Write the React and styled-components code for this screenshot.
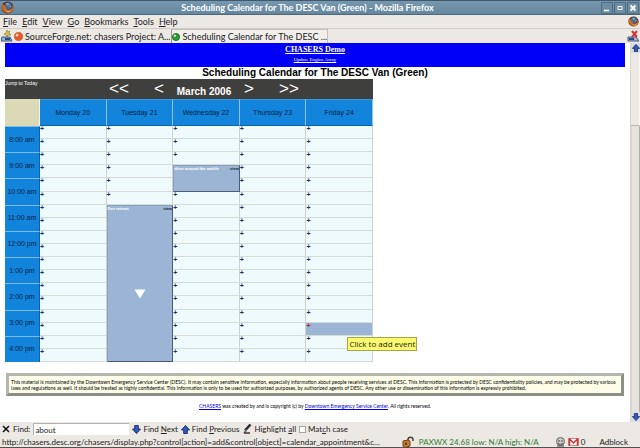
import React, { useState } from "react";
import styled, { createGlobalStyle } from "styled-components";

const days = ["Monday 20", "Tuesday 21", "Wednesday 22", "Thursday 23", "Friday 24"];

const hours = [
	"8:00 am",
	"9:00 am",
	"10:00 am",
	"11:00 am",
	"12:00 pm",
	"1:00 pm",
	"2:00 pm",
	"3:00 pm",
	"4:00 pm",
];

// start and length are counted in half hours from 8:00 am
const events = [
	{ day: 1, start: 6, length: 12, title: "Dev retreat", more: true },
	{ day: 2, start: 3, length: 2, title: "drive around the awhile" },
];

const hovered = { day: 4, slot: 15 };

const menus = ["File", "Edit", "View", "Go", "Bookmarks", "Tools", "Help"];

const FirefoxIcon = ({ size }) => (
	<svg width={size} height={size} viewBox="0 0 14 14" aria-hidden="true">
		<circle cx="7" cy="7" r="6.5" fill="#5a2a1c" />
		<circle cx="7.5" cy="5.5" r="4" fill="#3c6c9c" />
		<path d="M5 2.5l3-.5 1 2-2 1zM8 5l3 0-1 2z" fill="#88a8b8" />
		<path
			d="M1 3c-1 5 1 9 6 10 4 0 6.500-3 6.500-6.500l-1-2.500c0 5-3 6.500-5.500 5.500-2-.8-1.500-2-.5-2.700C4 7 3.500 5.500 4 4.500L2.500 4z"
			fill="#cf6a24"
		/>
		<path d="M4 10c3 2 6 1 7.500-1.500C11 12 7 13 4 10z" fill="#f0b45c" />
	</svg>
);

const Ball = ({ color, dark, size }) => (
	<svg width={size} height={size} viewBox="0 0 10 10" aria-hidden="true">
		<circle cx="5" cy="5" r="4.500" fill={color} stroke={dark} />
		<circle cx="3.500" cy="3.500" r="1.500" fill="#fff" opacity="0.75" />
	</svg>
);

const NewTabIcon = () => (
	<svg width="12" height="12" viewBox="0 0 12 12" aria-hidden="true">
		<path d="M1 7h8l2 4H0z" fill="#9fb0cc" stroke="#44587e" />
		<path d="M4 8h5v2H4z" fill="#284890" />
		<path d="M6 0l1 2 2-1-1 2 2 2-3 0-1 2-1-2-2-1 2-1z" fill="#d8c240" stroke="#6f6420" strokeWidth="0.5" />
	</svg>
);

const CloseTabIcon = () => (
	<svg width="12" height="12" viewBox="0 0 12 12" aria-hidden="true">
		<path d="M1 7h8l3 4H1z" fill="#a9b4ca" stroke="#44587e" />
		<path d="M2 8h5v2H2z" fill="#284890" />
		<path d="M5 1l5 6M10 1L5 7" stroke="#d03434" strokeWidth="2" />
	</svg>
);

const ArrowIcon = ({ up, size }) => (
	<svg width={size} height={size} viewBox="0 0 10 10" aria-hidden="true">
		<path
			d={up ? "M5 .5L9.500 5.500H7V9.500H3V5.500H.5z" : "M5 9.500L.5 4.500H3V.5H7V4.500H9.500z"}
			fill="#3458b8"
			stroke="#142a68"
		/>
	</svg>
);

const MarkerIcon = () => (
	<svg width="10" height="10" viewBox="0 0 10 10" aria-hidden="true">
		<path d="M8.500 .5L3 6.500" stroke="#2c2c2c" strokeWidth="2.500" />
		<path d="M4 5L1 9h2l2-2z" fill="#777" />
		<path d="M2 9h6" stroke="#443030" strokeWidth="1.500" />
	</svg>
);

const LockIcon = () => (
	<svg width="13" height="12" viewBox="0 0 13 12" aria-hidden="true">
		<path d="M6 5V3.500C6 .5 11 .5 11 3.500V5" fill="none" stroke="#444" strokeWidth="1.500" />
		<path d="M1 5l5-1 2 1v5l-5 1.500L1 10z" fill="#c47e2c" stroke="#6c4012" />
		<path d="M4 6.500v2.500" stroke="#3c2408" strokeWidth="1.500" />
	</svg>
);

const AgentIcon = () => (
	<svg width="11" height="10" viewBox="0 0 11 10" aria-hidden="true">
		<circle cx="5.500" cy="4.500" r="4" fill="#ccc" stroke="#666" />
		<path d="M3 4h2M6 4h2M3 6.500c2 1 3 1 5 0M2 9h7" stroke="#444" fill="none" />
	</svg>
);

const MailIcon = () => (
	<svg width="11" height="8" viewBox="0 0 11 8" aria-hidden="true">
		<path d="M.5 .5h10v7H.5z" fill="#fff" stroke="#c88" />
		<path d="M1.500 7.500V1L5.500 5l4-4v6.500" fill="none" stroke="#d03030" strokeWidth="1.500" />
	</svg>
);

const Mnemonic = ({ text, at = 0 }) => (
	<>
		{text.slice(0, at)}
		<u>{text[at]}</u>
		{text.slice(at + 1)}
	</>
);

const DayCell = ({ day, slot }) => {
	const event = events.find((e) => e.day === day && slot >= e.start && slot < e.start + e.length);

	if (event && event.start !== slot) return null;

	if (event) {
		return (
			<EventCell rowSpan={event.length}>
				<EventHead>
					<span>{event.title}</span>
					<ViewLink href="#view">view</ViewLink>
				</EventHead>
				{event.more && (
					<More width="12" height="10" viewBox="0 0 12 10" aria-hidden="true">
						<path d="M.5 .5h11L6 9.500z" fill="#fff" />
					</More>
				)}
			</EventCell>
		);
	}

	const active = hovered.day === day && hovered.slot === slot;

	return (
		<SlotCell $active={active}>
			<AddLink href="#add" $active={active}>
				+
			</AddLink>
			{active && <Tooltip role="tooltip">Click to add event</Tooltip>}
		</SlotCell>
	);
};

const Calendar = () => (
	<CalendarWrap>
		<NavBar>
			<JumpLink href="#today">Jump to Today</JumpLink>
			<NavLink href="#back4">&lt;&lt;</NavLink>
			<NavLink href="#back1">&lt;</NavLink>
			<Month>March 2006</Month>
			<NavLink href="#next1">&gt;</NavLink>
			<NavLink href="#next4">&gt;&gt;</NavLink>
		</NavBar>
		<Grid>
			<thead>
				<tr>
					<Corner />
					{days.map((day) => (
						<DayHead key={day} scope="col">
							{day}
						</DayHead>
					))}
				</tr>
			</thead>
			<tbody>
				{hours.map((hour, h) => (
					<React.Fragment key={hour}>
						<tr>
							<TimeHead scope="row" rowSpan={2}>
								{hour}
							</TimeHead>
							{days.map((day, d) => (
								<DayCell key={day} day={d} slot={h * 2} />
							))}
						</tr>
						<tr>
							{days.map((day, d) => (
								<DayCell key={day} day={d} slot={h * 2 + 1} />
							))}
						</tr>
					</React.Fragment>
				))}
			</tbody>
		</Grid>
	</CalendarWrap>
);

const App = () => {
	const [query, setQuery] = useState("about");

	return (
		<Window>
			<GlobalStyle />
			<TitleBar>
				<FirefoxIcon size={13} />
				<WindowTitle>Scheduling Calendar for The DESC Van (Green) - Mozilla Firefox</WindowTitle>
				<WindowButton aria-label="Minimize">
					<svg width="8" height="8" viewBox="0 0 8 8">
						<path d="M1 6.500h5" stroke="#fff" strokeWidth="1.500" />
					</svg>
				</WindowButton>
				<WindowButton aria-label="Maximize">
					<svg width="8" height="8" viewBox="0 0 8 8">
						<path d="M2 2.500h4v3H2z" fill="none" stroke="#fff" />
					</svg>
				</WindowButton>
				<WindowButton aria-label="Close">
					<svg width="8" height="8" viewBox="0 0 8 8">
						<path d="M1.500 1.500l5 5M6.500 1.500l-5 5" stroke="#fff" strokeWidth="2" />
					</svg>
				</WindowButton>
			</TitleBar>

			<MenuBar>
				{menus.map((menu) => (
					<MenuButton key={menu}>
						<Mnemonic text={menu} />
					</MenuButton>
				))}
				<Spacer />
				<FirefoxIcon size={11} />
			</MenuBar>

			<TabBar>
				<IconButton aria-label="New tab">
					<NewTabIcon />
				</IconButton>
				<Tab>
					<Ball color="#e8562c" dark="#c8702c" size={9} />
					SourceForge.net: chasers Project: A...
				</Tab>
				<Tab $active>
					<Ball color="#2c9c2c" dark="#145c14" size={8} />
					Scheduling Calendar for The DESC ...
				</Tab>
				<Spacer />
				<IconButton aria-label="Close tab">
					<CloseTabIcon />
				</IconButton>
			</TabBar>

			<Viewport>
				<Page>
					<Banner>
						<BannerLink href="#home">CHASERS Demo</BannerLink>
						<BannerLink href="#update" $small>
							Update Engine Array
						</BannerLink>
					</Banner>
					<PageTitle>Scheduling Calendar for The DESC Van (Green)</PageTitle>
					<Calendar />
					<Notice>
						This material is maintained by the Downtown Emergency Service Center (DESC). It may contain
						sensitive information, especially information about people receiving services at DESC. This
						information is protected by DESC confidentiality policies, and may be protected by various laws and
						regulations as well. It should be treated as highly confidential. This information is only to be
						used for authorized purposes, by authorized agents of DESC. Any other use or dissemination of this
						information is expressly prohibited.
					</Notice>
					<Copyright>
						<a href="#chasers">CHASERS</a> was created by and is copyright (c) by{" "}
						<a href="#desc">Downtown Emergency Service Center</a>. All rights reserved.
					</Copyright>
				</Page>
				<ScrollBar>
					<ScrollButton aria-label="Scroll up">
						<ArrowIcon up size={8} />
					</ScrollButton>
					<Thumb />
					<Trough />
					<ScrollButton aria-label="Scroll down">
						<ArrowIcon size={8} />
					</ScrollButton>
				</ScrollBar>
			</Viewport>

			<FindBar>
				<FindButton aria-label="Close find bar">
					<svg width="8" height="8" viewBox="0 0 8 8">
						<path d="M1 1l6 6M7 1L1 7" stroke="#111" strokeWidth="1.500" />
					</svg>
				</FindButton>
				<label htmlFor="find">Find:</label>
				<FindInput id="find" value={query} onChange={(e) => setQuery(e.target.value)} />
				<FindButton>
					<ArrowIcon size={9} />
					<span>
						<Mnemonic text="Find Next" at={5} />
					</span>
				</FindButton>
				<FindButton>
					<ArrowIcon up size={9} />
					<span>
						<Mnemonic text="Find Previous" at={5} />
					</span>
				</FindButton>
				<FindButton>
					<MarkerIcon />
					<span>
						<Mnemonic text="Highlight all" at={10} />
					</span>
				</FindButton>
				<MatchCase>
					<CheckBox type="checkbox" />
					<span>
						<Mnemonic text="Match case" at={3} />
					</span>
				</MatchCase>
			</FindBar>

			<StatusBar>
				<Url>
					http://chasers.desc.org/chasers/display.php?control[action]=add&amp;control[object]=calendar_appointment&amp;c...
				</Url>
				<LockIcon />
				<Weather>PAXWX 24.68 low: N/A high: N/A</Weather>
				<MailStatus>
					<AgentIcon />
					<MailIcon />
					<span>0</span>
				</MailStatus>
				<span>Adblock</span>
			</StatusBar>
		</Window>
	);
};

export default App;

const GlobalStyle = createGlobalStyle`
	* {
		box-sizing: border-box;
	}

	body {
		margin: 0;
		background: #ece8e4;
		color: #222;
		font-family: Lato, "Open Sans", sans-serif;
		font-size: 9px;
		line-height: 12px;
	}

	button,
	input {
		margin: 0;
		padding: 0;
		border: 0;
		background: none;
		color: inherit;
		font: inherit;
	}

	svg {
		display: block;
		flex: none;
	}
`;

const Window = styled.div`
	display: flex;
	flex-direction: column;
	min-height: 100vh;
`;

const TitleBar = styled.div`
	display: flex;
	align-items: center;
	gap: 1px;
	height: 15px;
	padding: 0 1px;
	border-top: 1px solid #3f5a6e;
	border-bottom: 1px solid #4c667a;
	background: linear-gradient(#7797ad, #65879f);
`;

const WindowTitle = styled.div`
	flex: 1;
	color: #fff;
	font-weight: bold;
	text-align: center;
	white-space: nowrap;
`;

const WindowButton = styled.button`
	display: flex;
	align-items: center;
	justify-content: center;
	width: 12px;
	height: 12px;
	border: 1px solid #4f6d83;
	background: #6d8da3;
`;

const MenuBar = styled.div`
	display: flex;
	align-items: center;
	gap: 5px;
	height: 14px;
	padding: 0 1px 0 3px;
	border-bottom: 1px solid #d0cbc6;
`;

const MenuButton = styled.button`
	flex: none;
`;

const Spacer = styled.div`
	flex: 1;
`;

const TabBar = styled.div`
	display: flex;
	align-items: center;
	height: 14px;
	padding: 0 1px;
`;

const IconButton = styled.button`
	flex: none;
`;

const Tab = styled.button`
	display: flex;
	align-items: center;
	gap: 2px;
	flex: 0 1 157px;
	height: 14px;
	border-left: 1px solid ${(props) => (props.$active ? "#9a9692" : "transparent")};
	border-right: 1px solid ${(props) => (props.$active ? "#c4c0bc" : "transparent")};
	border-top: 1px solid ${(props) => (props.$active ? "#c4c0bc" : "transparent")};
	background: ${(props) => (props.$active ? "#f1eeeb" : "transparent")};
	white-space: nowrap;
`;

const Viewport = styled.div`
	display: flex;
	flex: 1;
`;

const Page = styled.main`
	flex: 1;
	padding: 0 5px;
	background: #fff;
	color: #000;
	font-family: "Liberation Sans", Arial, sans-serif;
`;

const Banner = styled.div`
	display: flex;
	flex-direction: column;
	align-items: center;
	height: 24px;
	background: #0000f8;
`;

const BannerLink = styled.a`
	color: #fff;
	font-family: "Liberation Serif", serif;
	font-size: ${(props) => (props.$small ? "5px" : "8px")};
	font-weight: ${(props) => (props.$small ? "normal" : "bold")};
	line-height: ${(props) => (props.$small ? "8px" : "13px")};
`;

const PageTitle = styled.h1`
	margin: 0;
	font-size: 10px;
	line-height: 12px;
	text-align: center;
`;

const CalendarWrap = styled.section`
	width: calc(60% - 4px);
`;

const NavBar = styled.div`
	display: grid;
	grid-template-columns: 91fr 46fr 34fr 56fr 34fr 46fr 61fr;
	align-items: center;
	height: 20px;
	background: #3f403e;
	color: #fff;
	text-align: center;
`;

const NavLink = styled.a`
	color: inherit;
	font-size: 17px;
	line-height: 20px;
	text-decoration: none;
`;

const JumpLink = styled.a`
	align-self: start;
	color: inherit;
	font-size: 5px;
	line-height: 8px;
	text-align: left;
	text-decoration: none;
`;

const Month = styled.strong`
	align-self: end;
	font-size: 10px;
	line-height: 14px;
	white-space: nowrap;
`;

const Grid = styled.table`
	width: 100%;
	height: 263px;
	border-spacing: 0;
	table-layout: fixed;
	font-size: 7px;
	line-height: 8px;
`;

const Corner = styled.td`
	width: 35px;
	height: 27px;
	padding: 0;
	border-right: 1px solid #f4f4e4;
	background: #dcdab6;
`;

const DayHead = styled.th`
	padding: 0;
	border-top: 1px solid #3c9ae0;
	border-right: 1px solid #8cc4ec;
	border-bottom: 1px solid #0b62aa;
	background: #1284dc;
	color: #041c3c;
	font-weight: normal;
`;

const TimeHead = styled.th`
	padding: 0;
	border-top: 1px solid #7cbcec;
	border-right: 1px solid #0b62aa;
	background: #1284dc;
	color: #041c3c;
	font-weight: normal;
`;

const SlotCell = styled.td`
	position: relative;
	height: 13px;
	padding: 0;
	border-right: 1px solid #ccd2cc;
	border-bottom: 1px solid #d4dcd6;
	background: ${(props) => (props.$active ? "#9cb4d6" : "#effafd")};
	vertical-align: top;
`;

const AddLink = styled.a`
	display: block;
	width: 5px;
	color: ${(props) => (props.$active ? "#c01c3c" : "#1c2c6c")};
	font-weight: bold;
	line-height: 6px;
	text-decoration: none;
`;

const EventCell = styled.td`
	padding: 0;
	border: 1px solid #8ba0be;
	border-right-color: #4c5c74;
	border-bottom-color: #4c5c74;
	background: #9cb4d6;
	vertical-align: top;
`;

const EventHead = styled.div`
	display: flex;
	justify-content: space-between;
	color: #fff;
	font-size: 4px;
	font-weight: bold;
	line-height: 6px;
	white-space: nowrap;
`;

const ViewLink = styled.a`
	color: #1c2434;
	text-decoration: none;
`;

const More = styled.svg`
	margin: 77px auto 0;
`;

const Tooltip = styled.div`
	position: absolute;
	top: 14px;
	left: 41px;
	z-index: 1;
	padding: 0 1px;
	border: 1px solid #a8a448;
	background: #fbf96c;
	color: #222;
	font-family: "Open Sans", "Noto Sans", sans-serif;
	font-size: 8px;
	line-height: 12px;
	white-space: nowrap;
`;

const Notice = styled.p`
	margin: 11px 1px 0;
	padding: 3px 2px 2px;
	border: 3px solid;
	border-color: #b4b6b0 #8c8e88 #8c8e88 #b4b6b0;
	background: #fdfde8;
	font-family: Lato, sans-serif;
	font-size: 5px;
	line-height: 6px;
`;

const Copyright = styled.p`
	margin: 6px 0 0;
	font-family: Lato, sans-serif;
	font-size: 5px;
	line-height: 8px;
	text-align: center;

	a {
		color: #0000e0;
	}
`;

const ScrollBar = styled.div`
	display: flex;
	flex-direction: column;
	width: 10px;
	border-left: 1px solid #d8d4d0;
	background: #ece8e4;
`;

const ScrollButton = styled.button`
	display: flex;
	align-items: center;
	justify-content: center;
	height: 10px;
	background: #dcdce4;
`;

const Thumb = styled.div`
	height: 73px;
	border-right: 1px solid #f8f6f4;
	border-bottom: 1px solid #b8b4b0;
`;

const Trough = styled.div`
	flex: 1;
	border-left: 1px solid #d8d4d0;
	border-right: 1px solid #b0aca6;
	background: #e6e2de;
`;

const FindBar = styled.div`
	display: flex;
	align-items: center;
	gap: 3px;
	height: 14px;
	padding: 0 2px;
	font-size: 8px;
`;

const FindButton = styled.button`
	display: flex;
	align-items: center;
	gap: 2px;
	white-space: nowrap;
`;

const FindInput = styled.input`
	flex: 0 1 96px;
	min-width: 0;
	height: 12px;
	padding: 0 1px;
	border-top: 1px solid #b4b0ac;
	border-left: 1px solid #b4b0ac;
	background: #fff;
`;

const MatchCase = styled.label`
	display: flex;
	align-items: center;
	gap: 2px;
`;

const CheckBox = styled.input`
	appearance: none;
	width: 7px;
	height: 7px;
	border: 1px solid #a8a4a0;
	background: #fff;
`;

const StatusBar = styled.footer`
	display: flex;
	align-items: center;
	height: 12px;
	padding: 0 12px 0 2px;
	border-bottom: 1px solid #55504c;
	font-size: 8px;
	white-space: nowrap;
`;

const Url = styled.span`
	flex: 1;
`;

const Weather = styled.span`
	margin-left: 4px;
	color: #2c7c2c;
`;

const MailStatus = styled.span`
	display: flex;
	align-items: center;
	gap: 2px;
	margin: 0 14px 0 16px;
`;
